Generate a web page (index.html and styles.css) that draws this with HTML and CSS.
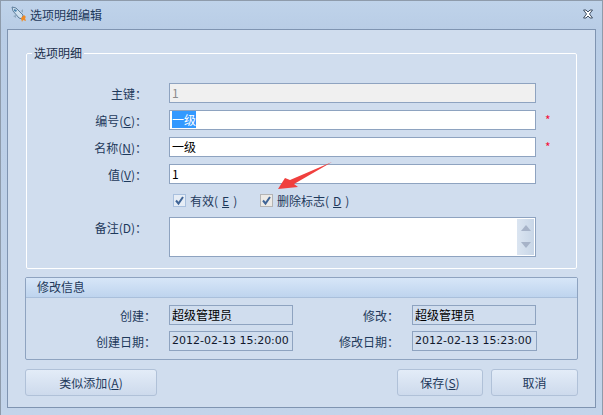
FILE: index.html
```html
<!DOCTYPE html>
<html lang="zh-CN">
<head>
  <meta charset="UTF-8" />
  <title>选项明细编辑</title>
  <link rel="stylesheet" href="styles.css">
</head>
<body>
  <div class="window">
    <div class="titlebar">
      <svg class="app-icon" width="16" height="18" viewBox="0 0 16 18">
        <path d="M1 1 L5 2 L12 9 L11 13 L8 12 L2 5 Z" fill="#cfe0ee" stroke="#5f7f9c" stroke-width="1"/>
        <path d="M3 3 L6 4 L5 6 L3 5 Z" fill="#4f86b0"/>
        <path d="M5 9 L2 10 L5 12 Z" fill="#8fa9bf"/>
        <path d="M10 5 L12 3 L12 7 Z" fill="#8fa9bf"/>
        <path d="M10 12 L13 9 L15 11 L14 12 L15 15 L12 14 L11 16 Z" fill="#f08a24"/>
      </svg>
      <span class="title">选项明细编辑</span>
      <svg class="close" width="12" height="10" viewBox="0 0 12 10">
        <path d="M1.5 1 L4 1 L6 3 L8 1 L10.5 1 L7.5 5 L10.5 9 L8 9 L6 7 L4 9 L1.5 9 L4.5 5 Z" fill="#fff" stroke="#3f4f63" stroke-width="1"/>
      </svg>
    </div>

    <div class="panel">
      <fieldset class="detail">
        <legend>选项明细</legend>
        <div class="row">
          <label>主键：</label>
          <div class="field disabled">1</div>
        </div>
        <div class="row">
          <label>编号(<u>C</u>)：</label>
          <div class="field"><span class="sel">一级</span></div>
          <span class="req">*</span>
        </div>
        <div class="row">
          <label>名称(<u>N</u>)：</label>
          <div class="field">一级</div>
          <span class="req">*</span>
        </div>
        <div class="row">
          <label>值(<u>V</u>)：</label>
          <div class="field">1</div>
        </div>
        <div class="checks">
          <span class="check first">
            <svg width="13" height="13" viewBox="0 0 13 13"><rect x="0.5" y="0.5" width="12" height="12" fill="#e6edf6" stroke="#a9c0de"/><path d="M3 6.5 L5.5 9.5 L10 3" fill="none" stroke="#3f6496" stroke-width="2"/></svg>
            有效(<u>E</u>)
          </span>
          <span class="check">
            <svg width="13" height="13" viewBox="0 0 13 13"><rect x="0.5" y="0.5" width="12" height="12" fill="#eceae6" stroke="#b4b4b4"/><path d="M3 6.5 L5.5 9.5 L10 3" fill="none" stroke="#3f6496" stroke-width="2"/></svg>
            删除标志(<u>D</u>)
          </span>
        </div>
        <div class="row tall">
          <label>备注(D)：</label>
          <div class="field memo">
            <div class="scroll">
              <svg width="10" height="6" viewBox="0 0 10 6"><path d="M5 0 L10 6 L0 6 Z" fill="#a7b3c8"/></svg>
              <svg width="10" height="6" viewBox="0 0 10 6"><path d="M0 0 L10 0 L5 6 Z" fill="#a7b3c8"/></svg>
            </div>
          </div>
        </div>
      </fieldset>

      <div class="info">
        <div class="info-head">修改信息</div>
        <div class="info-grid">
          <label>创建：</label>
          <div class="field readonly">超级管理员</div>
          <label>修改：</label>
          <div class="field readonly">超级管理员</div>
          <label>创建日期：</label>
          <div class="field readonly date">2012-02-13 15:20:00</div>
          <label>修改日期：</label>
          <div class="field readonly date wide">2012-02-13 15:23:00</div>
        </div>
      </div>

      <div class="buttons">
        <button class="btn-similar">类似添加(<u>A</u>)</button>
        <button class="btn-save">保存(<u>S</u>)</button>
        <button class="btn-cancel">取消</button>
      </div>
    </div>

    <!-- red arrow drawn over the form -->
    <svg class="arrow" width="60" height="32" viewBox="0 0 60 32">
      <path d="M2 28 L9 17 L14 19 L56 1 L18 23 L22 26 Z" fill="#f0403e"/>
    </svg>
  </div>
</body>
</html>
```

FILE: styles.css
```css
* { box-sizing: border-box; margin: 0; padding: 0; }
html, body { width: 603px; height: 415px; overflow: hidden; }
body { font-family: "Noto Sans CJK SC", "Liberation Sans", sans-serif; font-size: 12px; color: #1e395b; }
u { text-decoration: underline; }

.window {
  position: relative; width: 603px; height: 415px; padding: 0 7px;
  background: linear-gradient(#bfd3ea, #b9cde6 28px, #c3d4ea);
  border: 1px solid #8e9bab; border-bottom: 0;
}
.titlebar { display: flex; align-items: center; height: 28px; margin: 0 -1px; }
.app-icon { margin: 0 3px 0 4px; }
.title { line-height: 28px; }
.close { margin-left: auto; margin-right: 2px; margin-top: -2px; }

.panel {
  width: 589px; height: 379px; margin-left: -1px; padding: 15px 17px 0;
  background: #d0ddee; border: 1px solid #7f94b1;
}

.detail { margin: 0 1px; height: 224px; border: 1px solid #fff; border-radius: 2px; padding: 22px 0 0; }
.detail legend { margin-left: 5px; padding: 0 2px 0 2px; line-height: 16px; color: #1b2f4b; }

.row { display: flex; align-items: center; height: 20px; margin-bottom: 7px; }
.row label { width: 120px; margin-right: 22px; text-align: right; }
.row .field { width: 367px; }
.row.tall { height: 40px; align-items: flex-start; }
.row.tall label { margin-top: 2px; }

.field {
  height: 20px; padding: 0 2px; line-height: 18px; background: #fff;
  border: 1px solid #8ea3c0; color: #000; white-space: nowrap; overflow: hidden;
}
.field.disabled { background: #f0f0f0; color: #8c8c8c; }
.field.readonly { background: #d0ddee; width: 124px; }
.field.date { font-family: "DejaVu Sans", sans-serif; font-size: 11px; padding: 0 2px; color: #10182c; }
.field.wide { width: 125px; }
.sel { background: #3399ff; color: #fff; }
.req { margin-left: 9px; color: #f5103c; font-size: 12px; line-height: 14px; }

.checks { display: flex; align-items: center; height: 19px; margin-bottom: 7px; padding-left: 146px; }
.check { display: flex; align-items: center; gap: 4px; }
.check svg { margin-right: 0; }
.check.first { width: 87px; }

.field.memo { position: relative; height: 40px; }
.scroll {
  position: absolute; top: 1px; right: 1px; bottom: 1px; width: 17px;
  display: flex; flex-direction: column; align-items: center; justify-content: space-between;
  padding: 6px 0 7px; background: linear-gradient(90deg, #dbe5f1, #c8d6e7);
}

.info { height: 83px; margin-top: 8px; border: 1px solid #8ea3c0; border-radius: 2px; }
.info-head {
  height: 20px; padding-left: 11px; line-height: 18px;
  background: linear-gradient(#d7e6f8, #bed4ee); border-bottom: 1px solid #a9bfdb;
}
.info-grid {
  display: grid; grid-template-columns: 130px 124px 93px 124px; column-gap: 13px; row-gap: 6px;
  padding-top: 7px; align-items: center;
}
.info-grid label { text-align: right; }

.buttons { display: flex; gap: 8px; margin-top: 9px; }
.buttons button {
  height: 27px; font: inherit; color: #1e395b;
  background: linear-gradient(#e3ecf8, #cddaec);
  border: 1px solid #b0c1d8; border-radius: 3px;
}
.btn-similar { width: 132px; margin-right: auto; }
.btn-save { width: 86px; }
.btn-cancel { width: 87px; }

.arrow { position: absolute; left: 275px; top: 160px; }
```
